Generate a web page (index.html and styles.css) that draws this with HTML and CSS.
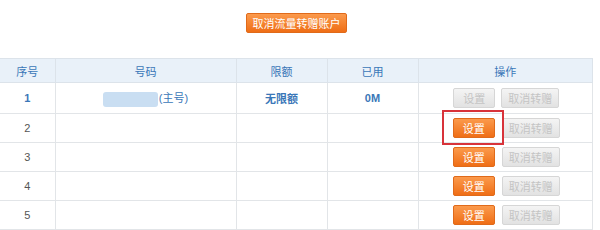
FILE: index.html
```html
<!DOCTYPE html>
<html lang="zh-CN">

<head>
    <meta charset="UTF-8">
    <title>流量转赠</title>
    <link rel="stylesheet" href="styles.css">
</head>

<body>
    <div class="wrap">
        <div class="top">
            <button class="btn btn-orange btn-top">取消流量转赠账户</button>
        </div>
        <table class="list">
            <thead>
                <tr>
                    <th class="c-no">序号</th>
                    <th class="c-num">号码</th>
                    <th class="c-limit">限额</th>
                    <th class="c-used">已用</th>
                    <th class="c-op">操作</th>
                </tr>
            </thead>
            <tbody>
                <tr class="first">
                    <td>1</td>
                    <td><span class="mask"></span>(主号)</td>
                    <td>无限额</td>
                    <td>0M</td>
                    <td>
                        <div class="ops">
                            <button class="btn btn-gray">设置</button>
                            <button class="btn btn-gray btn-wide">取消转赠</button>
                        </div>
                    </td>
                </tr>
                <tr>
                    <td>2</td>
                    <td></td>
                    <td></td>
                    <td></td>
                    <td>
                        <div class="ops">
                            <!-- 红框标注 -->
                            <span class="mark"></span>
                            <button class="btn btn-orange">设置</button>
                            <button class="btn btn-gray btn-wide">取消转赠</button>
                        </div>
                    </td>
                </tr>
                <tr>
                    <td>3</td>
                    <td></td>
                    <td></td>
                    <td></td>
                    <td>
                        <div class="ops">
                            <button class="btn btn-orange">设置</button>
                            <button class="btn btn-gray btn-wide">取消转赠</button>
                        </div>
                    </td>
                </tr>
                <tr>
                    <td>4</td>
                    <td></td>
                    <td></td>
                    <td></td>
                    <td>
                        <div class="ops">
                            <button class="btn btn-orange">设置</button>
                            <button class="btn btn-gray btn-wide">取消转赠</button>
                        </div>
                    </td>
                </tr>
                <tr>
                    <td>5</td>
                    <td></td>
                    <td></td>
                    <td></td>
                    <td>
                        <div class="ops">
                            <button class="btn btn-orange">设置</button>
                            <button class="btn btn-gray btn-wide">取消转赠</button>
                        </div>
                    </td>
                </tr>
            </tbody>
        </table>
    </div>
</body>

</html>
```

FILE: styles.css
```css
* {
    margin: 0;
    padding: 0;
    box-sizing: border-box;
}

body {
    background: #fff;
    font-family: "Liberation Sans", "Noto Sans CJK SC", sans-serif;
    font-size: 11px;
    color: #555;
}

.wrap {
    width: 593px;
}

.top {
    display: flex;
    justify-content: center;
    padding-top: 13px;
    height: 58px;
}

.btn {
    display: inline-flex;
    align-items: center;
    justify-content: center;
    height: 20px;
    border-radius: 2px;
    font-family: inherit;
    font-size: 11px;
    cursor: pointer;
}

.btn-orange {
    width: 42px;
    color: #fff;
    border: 1px solid #e06a1a;
    background: linear-gradient(#fb9a4c, #ef6e16);
}

.btn-top {
    width: 101px;
}

.btn-gray {
    width: 40px;
    color: #c4c4c4;
    border: 1px solid #d6d6d6;
    background: linear-gradient(#f4f4f4, #e2e2e2);
}

.btn-wide {
    width: 58px;
}

.list {
    width: 100%;
    border-collapse: collapse;
    table-layout: fixed;
}

.list th {
    height: 24px;
    background: #e9f1f9;
    color: #3a77b8;
    font-weight: normal;
    border: 1px solid #dce3ea;
    border-left: none;
}

.list td {
    height: 29px;
    text-align: center;
    border: 1px solid #e2e5e8;
    border-left: none;
}

.list tr.first td {
    height: 31px;
    color: #3a77b8;
    font-weight: bold;
}

.list tr.first td:nth-child(2) {
    font-weight: normal;
}

.c-no { width: 55px; }
.c-num { width: 181px; }
.c-limit { width: 91px; }
.c-used { width: 91px; }

.mask {
    display: inline-block;
    width: 55px;
    height: 15px;
    margin-right: 1px;
    vertical-align: middle;
    border-radius: 3px;
    background: #c9def2;
}

.ops {
    position: relative;
    display: flex;
    justify-content: center;
    gap: 7px;
    padding-left: 2px;
}

.ops .btn-gray:first-child {
    width: 42px;
    margin-right: -1px;
}

.mark {
    position: absolute;
    left: 23px;
    top: -8px;
    width: 62px;
    height: 35px;
    border: 2px solid #d8333a;
}
```
